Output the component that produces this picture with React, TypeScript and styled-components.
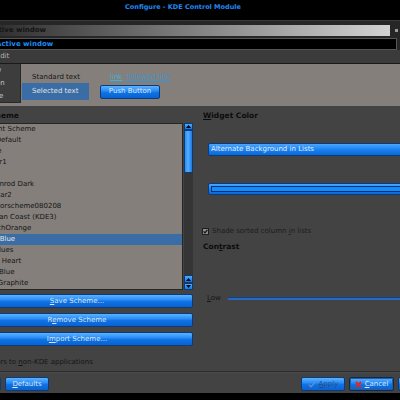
import React from "react";
import styled, { createGlobalStyle } from "styled-components";

const GlobalStyle = createGlobalStyle`
  html, body {
    margin: 0;
    padding: 0;
    background: #000;
  }
  body {
    font-family: "DejaVu Sans", Verdana, sans-serif;
    font-size: 7px;
  }
`;

const schemes = [
  "Current Scheme",
  "KDE Default",
  "Coffee",
  "Amber1",
  "Dark",
  "Goldenrod Dark",
  "Modular2",
  "mycolorscheme080208",
  "Mexican Coast (KDE3)",
  "ScratchOrange",
  "Deep Blue",
  "The Blues",
  "Brave Heart",
  "Steel Blue",
  "Dark Graphite",
];

const SELECTED = 10;

export default function App() {
  return (
    <>
      <GlobalStyle />
      <Screen>
        <TitleBar>Configure - KDE Control Module</TitleBar>

        <PreviewFrame>
          <InactiveRow>
            <InactiveBar>Inactive window</InactiveBar>
            <TinyButton />
          </InactiveRow>
          <ActiveBar>Active window</ActiveBar>
          <MenuBar>
            <span>File</span>
            <span>Edit</span>
          </MenuBar>
        </PreviewFrame>

        <PreviewBody>
          <Popup>
            <PopupItem>New</PopupItem>
            <PopupItem>Open</PopupItem>
            <PopupItem>Save</PopupItem>
          </Popup>
          <PreviewGrid>
            <StandardText>Standard text</StandardText>
            <Links>
              <Link>link</Link>
              <Link $followed>followed link</Link>
            </Links>
            <SelectedText>Selected text</SelectedText>
            <PushCell>
              <BlueButton $w={60}>
                <span>Push Button</span>
              </BlueButton>
            </PushCell>
          </PreviewGrid>
        </PreviewBody>

        <Panel>
          <Columns>
            <LeftColumn>
              <GroupLabel>Color Scheme</GroupLabel>
              <ListRow>
                <ListBox>
                  {schemes.map((name, i) => (
                    <ListItem key={name} $selected={i === SELECTED}>
                      {name}
                    </ListItem>
                  ))}
                </ListBox>
                <ScrollBar>
                  <ArrowButton $h={7}>
                    <Arrow up />
                  </ArrowButton>
                  <Handle />
                  <Trough />
                  <ArrowButton $h={8}>
                    <Arrow up />
                  </ArrowButton>
                  <ArrowButton $h={7}>
                    <Arrow />
                  </ArrowButton>
                </ScrollBar>
              </ListRow>
              <SchemeButtons>
                <BlueButton>
                  <span>
                    <u>S</u>ave Scheme...
                  </span>
                </BlueButton>
                <BlueButton>
                  <span>
                    R<u>e</u>move Scheme
                  </span>
                </BlueButton>
                <BlueButton>
                  <span>
                    I<u>m</u>port Scheme...
                  </span>
                </BlueButton>
              </SchemeButtons>
            </LeftColumn>

            <RightColumn>
              <GroupLabel $indent={1}>
                <u>W</u>idget Color
              </GroupLabel>
              <Combo>Alternate Background in Lists</Combo>
              <ColorButton>
                <ColorSwatch />
              </ColorButton>
              <CheckRow>
                <CheckBox>
                  <svg width="5" height="5" viewBox="0 0 5 5">
                    <path d="M0.6 2.4 L2 3.9 L4.4 0.8" stroke="#111" strokeWidth="1.2" fill="none" />
                  </svg>
                </CheckBox>
                <span>
                  Shade sorted column <u>i</u>n lists
                </span>
              </CheckRow>
              <SubLabel>
                Con<u>t</u>rast
              </SubLabel>
              <SliderRow>
                <span>
                  <u>L</u>ow
                </span>
                <SliderTrack />
              </SliderRow>
            </RightColumn>
          </Columns>

          <ApplyRow>
            Apply colors to <u>n</u>on-KDE applications
          </ApplyRow>
          <Separator />

          <ButtonBar>
            <BlueButton $w={41}>
              <span>Help</span>
            </BlueButton>
            <BlueButton $w={44}>
              <span>
                <u>D</u>efaults
              </span>
            </BlueButton>
            <Spacer />
            <BlueButton $w={44} $dim>
              <svg width="8" height="7" viewBox="0 0 8 7">
                <path d="M0.8 3.6 L3 5.8 L7.2 0.8" stroke="#6f8fb8" strokeWidth="1.3" fill="none" />
              </svg>
              <span>
                <u>A</u>pply
              </span>
            </BlueButton>
            <BlueButton $w={45} $focus>
              <svg width="7" height="7" viewBox="0 0 7 7">
                <path d="M1 1 L6 6 M6 1 L1 6" stroke="#e8261c" strokeWidth="1.8" />
              </svg>
              <span>
                <u>C</u>ancel
              </span>
            </BlueButton>
            <BlueButton $w={45}>
              <span>
                <u>O</u>K
              </span>
            </BlueButton>
          </ButtonBar>
          <Footer />
        </Panel>
      </Screen>
    </>
  );
}

const Arrow = ({ up }: { up?: boolean }) => (
  <svg width="5" height="3" viewBox="0 0 5 3">
    <path d={up ? "M0 3 L2.5 0 L5 3 Z" : "M0 0 L2.5 3 L5 0 Z"} fill="#050505" />
  </svg>
);

const Screen = styled.div`
  width: 400px;
  height: 400px;
  overflow: hidden;
  background: #434343;
  display: flex;
  flex-direction: column;
  color: #141414;
  line-height: 1;
`;

const TitleBar = styled.div`
  height: 20px;
  flex: none;
  background: #000;
  color: #2189f2;
  font-weight: bold;
  font-size: 6.5px;
  line-height: 14px;
  text-align: center;
  padding-right: 34px;
`;

const PreviewFrame = styled.div`
  flex: none;
  background: #262626;
  border-top: 1px solid #3a3a3a;
  padding-top: 4px;
`;

const InactiveRow = styled.div`
  display: flex;
  align-items: center;
  height: 11px;
`;

const InactiveBar = styled.div`
  margin-left: -21px;
  width: 411px;
  height: 11px;
  flex: none;
  background: linear-gradient(to right, #303030 5%, #d2d2d2);
  color: #141414;
  font-weight: bold;
  line-height: 11px;
  padding-left: 3px;
  box-sizing: border-box;
`;

const TinyButton = styled.div`
  width: 3px;
  height: 3px;
  margin-left: 5px;
  background: #9a9a9a;
`;

const ActiveBar = styled.div`
  margin: 2px 0 0 -8px;
  width: 405px;
  height: 12px;
  box-sizing: border-box;
  background: #000;
  border: 1px solid #555;
  color: #1d8af4;
  font-weight: bold;
  line-height: 10px;
  padding-left: 3px;
`;

const MenuBar = styled.div`
  height: 13px;
  background: #3b3b3b;
  display: flex;
  gap: 8px;
  margin-left: -24px;
  line-height: 13px;
  color: #b4b4b4;
`;

const PreviewBody = styled.div`
  flex: none;
  height: 42px;
  position: relative;
  background: #847f7b;
  border-top: 1px solid #1a1a1a;
`;

const Popup = styled.div`
  position: absolute;
  left: 0;
  top: 0;
  width: 21px;
  height: 39px;
  box-sizing: border-box;
  background: #3d3d3d;
  border-right: 1px solid #282828;
  border-bottom: 1px solid #282828;
  overflow: hidden;
`;

const PopupItem = styled.div`
  height: 13px;
  line-height: 13px;
  margin-left: -14px;
  color: #c4c4c4;
  white-space: nowrap;
`;

const PreviewGrid = styled.div`
  display: grid;
  grid-template-columns: 67px auto;
  grid-template-rows: 12px 17px;
  column-gap: 11px;
  padding: 7px 0 0 22px;
`;

const StandardText = styled.div`
  padding-left: 10px;
  line-height: 12px;
  color: #151515;
`;

const Links = styled.div`
  display: flex;
  gap: 4px;
  padding-left: 10px;
  line-height: 12px;
`;

const Link = styled.span<{ $followed?: boolean }>`
  color: ${(p) => (p.$followed ? "#3597da" : "#33b6dc")};
  text-decoration: underline;
`;

const SelectedText = styled.div`
  background: #3a6da6;
  color: #e2e2e2;
  padding-left: 10px;
  line-height: 17px;
`;

const PushCell = styled.div`
  display: flex;
  align-items: center;
`;

const Panel = styled.div`
  flex: 1;
  display: flex;
  flex-direction: column;
  background: #434343;
`;

const Columns = styled.div`
  display: flex;
  align-items: flex-start;
`;

const LeftColumn = styled.div`
  margin-left: -39px;
  width: 232px;
  flex: none;
  display: flex;
  flex-direction: column;
`;

const RightColumn = styled.div`
  margin-left: 9px;
  width: 230px;
  flex: none;
  display: flex;
  flex-direction: column;
`;

const GroupLabel = styled.div<{ $indent?: number }>`
  margin: 5px 0 0 ${(p) => p.$indent ?? 0}px;
  font-weight: bold;
  font-size: 7.5px;
  line-height: 10px;
  color: #0c0c0c;
  white-space: nowrap;
`;

const ListRow = styled.div`
  margin-top: 2px;
  height: 167px;
  display: flex;
`;

const ListBox = styled.div`
  flex: 1;
  background: #847f7b;
  border: 1px solid #262626;
  overflow: hidden;
`;

const ListItem = styled.div<{ $selected?: boolean }>`
  height: 11px;
  line-height: 11px;
  padding-left: 17px;
  white-space: nowrap;
  background: ${(p) => (p.$selected ? "#3a6da6" : "transparent")};
  color: ${(p) => (p.$selected ? "#e4e4e4" : "#151515")};
`;

const ScrollBar = styled.div`
  width: 9px;
  margin-left: 1px;
  background: #353535;
  display: flex;
  flex-direction: column;
`;

const ArrowButton = styled.div<{ $h: number }>`
  height: ${(p) => p.$h}px;
  flex: none;
  box-sizing: border-box;
  border: 1px solid #0b3a78;
  border-radius: 1px;
  background: linear-gradient(to bottom, #4fa9ff, #1177e6);
  display: flex;
  align-items: center;
  justify-content: center;
`;

const Handle = styled.div`
  height: 43px;
  flex: none;
  box-sizing: border-box;
  border: 1px solid #0b3a78;
  border-radius: 1px;
  background: linear-gradient(to right, #2a8cf5, #55adff 45%, #1a7ae6);
`;

const Trough = styled.div`
  flex: 1;
`;

const SchemeButtons = styled.div`
  margin-top: 4px;
  display: flex;
  flex-direction: column;
  gap: 5px;
`;

const BlueButton = styled.button<{ $w?: number; $dim?: boolean; $focus?: boolean }>`
  all: unset;
  box-sizing: border-box;
  height: 14px;
  flex: none;
  width: ${(p) => (p.$w ? `${p.$w}px` : "auto")};
  display: flex;
  align-items: center;
  justify-content: center;
  gap: 3px;
  font-family: "DejaVu Sans", Verdana, sans-serif;
  font-size: 7px;
  white-space: nowrap;
  border: 1px solid ${(p) => (p.$focus ? "#0a2a58" : "#0b3b7a")};
  border-radius: 2px;
  box-shadow: ${(p) => (p.$focus ? "inset 0 0 0 1px #2a5a98" : "none")};
  background: linear-gradient(
    to bottom,
    #5ab2ff 0%,
    #2a8cf6 40%,
    #0f72e4 55%,
    #0a62d0 100%
  );
  color: ${(p) => (p.$dim ? "#2d4c78" : "#dce6f6")};
`;

const Combo = styled.div`
  margin: 22px 0 0 6px;
  height: 13px;
  box-sizing: border-box;
  border: 1px solid #0b3b7a;
  border-radius: 2px;
  background: linear-gradient(to bottom, #4aa6ff, #1a82f0 50%, #0a68d8);
  color: #e4eefc;
  line-height: 11px;
  padding-left: 2px;
  white-space: nowrap;
`;

const ColorButton = styled.div`
  margin: 27px 0 0 6px;
  height: 12px;
  box-sizing: border-box;
  border: 1px solid #0b3b7a;
  border-radius: 2px;
  background: linear-gradient(to bottom, #4aa6ff, #1a82f0 50%, #0a68d8);
  padding: 2px 0 2px 2px;
`;

const ColorSwatch = styled.div`
  height: 100%;
  box-sizing: border-box;
  border: 1px solid #06306a;
  background: #0f8dff;
`;

const CheckRow = styled.div`
  margin-top: 32px;
  display: flex;
  align-items: center;
  gap: 3px;
  line-height: 9px;
  color: #1c1c1c;
  white-space: nowrap;
`;

const CheckBox = styled.div`
  width: 7px;
  height: 7px;
  box-sizing: border-box;
  border: 1px solid #1e1e1e;
  background: #8c8c8c;
  display: flex;
  align-items: center;
  justify-content: center;
`;

const SubLabel = styled.div`
  margin: 6px 0 0 1px;
  font-weight: bold;
  font-size: 7.5px;
  line-height: 10px;
  color: #0c0c0c;
`;

const SliderRow = styled.div`
  margin: 41px 0 0 5px;
  display: flex;
  align-items: center;
  gap: 7px;
  line-height: 10px;
  color: #141414;
`;

const SliderTrack = styled.div`
  flex: 1;
  height: 3px;
  box-sizing: border-box;
  border-top: 1px solid #163e78;
  background: #2569c2;
`;

const ApplyRow = styled.div`
  margin: 11px 0 0 -36px;
  line-height: 10px;
  color: #161616;
  white-space: nowrap;
`;

const Separator = styled.div`
  margin-top: 4px;
  height: 1px;
  background: #2c2c2c;
  border-bottom: 1px solid #4a4a4a;
`;

const ButtonBar = styled.div`
  margin: 4px 0 0 -40px;
  width: 483px;
  display: flex;
  gap: 4px;
  flex: none;
`;

const Spacer = styled.div`
  flex: 1;
`;

const Footer = styled.div`
  margin-top: 2px;
  flex: 1;
  background: #000;
`;
